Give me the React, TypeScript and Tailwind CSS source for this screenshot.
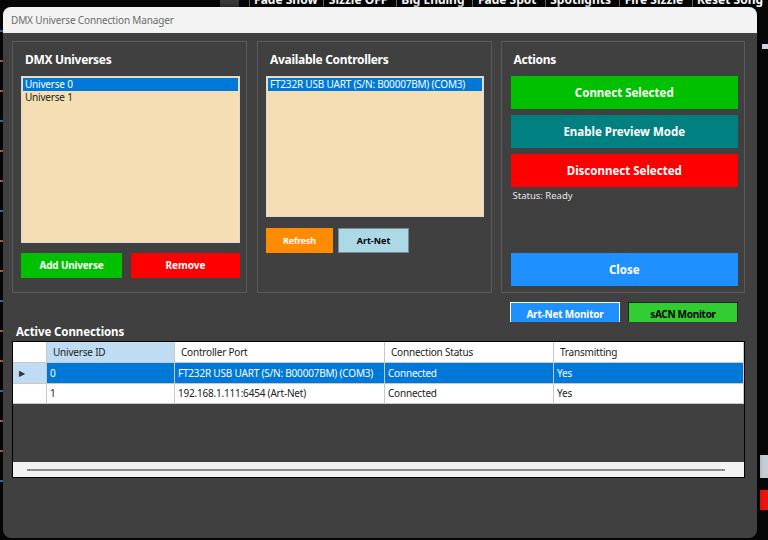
import React from "react";

const FONT = { fontFamily: '"Noto Sans", "Open Sans", sans-serif' };

const BG_BUTTONS = [
  { label: "Fade Show", w: 70 },
  { label: "Sizzle OFF", w: 72 },
  { label: "Big Ending", w: 72 },
  { label: "Fade Spot", w: 72 },
  { label: "Spotlights", w: 72 },
  { label: "Fire Sizzle", w: 72 },
  { label: "Reset Song", w: 72 },
];

function GroupBox({ title, width, pad, children }: { title: string; width: string; pad: string; children: React.ReactNode }) {
  return (
    <div className={`flex h-[252px] ${width} ${pad} flex-col border border-[#5a5a5a] pt-[9px]`}>
      <div className="h-[25px] whitespace-nowrap pl-[4px] text-[12px] font-bold leading-[17px] tracking-[-0.3px] text-white">
        {title}
      </div>
      {children}
    </div>
  );
}

function ListBox({ items, height }: { items: string[]; height: string }) {
  return (
    <div className={`${height} w-full border border-[#d9d9d9] bg-[#f5deb3] p-px`}>
      {items.map((it, i) => (
        <div
          key={it}
          className={
            i === 0
              ? "h-[13px] whitespace-nowrap bg-[#0078d7] pl-[2px] text-[10px] leading-[13px] tracking-[-0.2px] text-white"
              : "h-[13px] whitespace-nowrap pl-[2px] text-[10px] leading-[13px] tracking-[-0.2px] text-[#222]"
          }
        >
          {it}
        </div>
      ))}
    </div>
  );
}

const COLS = [
  { title: "Universe ID", w: "w-[128px]" },
  { title: "Controller Port", w: "w-[210px]" },
  { title: "Connection Status", w: "w-[169px]" },
  { title: "Transmitting", w: "flex-1" },
];

const ROWS = [
  ["0", "FT232R USB UART (S/N: B00007BM) (COM3)", "Connected", "Yes"],
  ["1", "192.168.1.111:6454 (Art-Net)", "Connected", "Yes"],
];

export default function App() {
  return (
    <div className="relative h-[540px] w-[768px] overflow-hidden bg-[#070707]" style={FONT}>
      {/* background application peeking around the dialog */}
      <div className="flex h-[7px] overflow-hidden pl-[220px]">
        <div className="mr-[10px] h-full w-[20px] bg-[#3a3a3a]" />
        {BG_BUTTONS.map((b) => (
          <div key={b.label} className="mr-[4px] h-full border-l border-[#6a6a6a] bg-black px-[4px]" style={{ width: b.w }}>
            <div className="-mt-[9px] whitespace-nowrap text-center text-[12px] font-bold text-white">{b.label}</div>
          </div>
        ))}
      </div>
      <div className="absolute left-0 top-[30px] flex h-[480px] w-[3px] flex-col gap-[28px]">
        {Array.from({ length: 16 }).map((_, i) => (
          <div key={i} className={i % 3 === 0 ? "h-[2px] bg-[#3a7fc0]" : "h-[2px] bg-[#b87a2e]"} />
        ))}
      </div>
      <div className="absolute right-0 top-[44px] h-[5px] w-[6px] bg-[#cfd6e0]" />
      <div className="absolute right-0 top-[455px] h-[23px] w-[8px] bg-[#c5ccd6]" />
      <div className="absolute right-0 top-[490px] h-[20px] w-[8px] bg-[#ee1111]" />

      {/* dialog window */}
      <div className="absolute left-[3px] top-[7px] flex h-[531px] w-[754px] flex-col overflow-hidden rounded-[8px] bg-[#404040] shadow-[0_0_6px_rgba(0,0,0,0.6)]">
        <div className="flex h-[26px] items-center whitespace-nowrap bg-[#f3f3f3] pl-[8px] text-[10px] tracking-[-0.15px] text-[#6b6b6b]">
          DMX Universe Connection Manager
        </div>

        <div className="flex flex-col pl-[9px] pr-[12px] pt-[8px]">
          <div className="flex gap-[10px]">
            <GroupBox title="DMX Universes" width="w-[235px]" pad="pl-[8px] pr-[6px]">
              <ListBox items={["Universe 0", "Universe 1"]} height="h-[167px]" />
              <div className="mt-[10px] flex gap-[9px]">
                <button className="h-[25px] w-[101px] whitespace-nowrap bg-[#00c000] text-[10px] font-bold tracking-[-0.2px] text-white">
                  Add Universe
                </button>
                <button className="h-[25px] w-[109px] whitespace-nowrap bg-[#ff0000] text-[10px] font-bold text-white">Remove</button>
              </div>
            </GroupBox>

            <GroupBox title="Available Controllers" width="w-[235px]" pad="pl-[8px] pr-[7px]">
              <ListBox items={["FT232R USB UART (S/N: B00007BM) (COM3)"]} height="h-[141px]" />
              <div className="mt-[11px] flex gap-[5px]">
                <button className="h-[25px] w-[67px] whitespace-nowrap bg-[#ff8c00] text-[9px] font-bold tracking-[-0.2px] text-white">
                  Refresh
                </button>
                <button className="h-[25px] w-[71px] whitespace-nowrap border border-[#7a8a90] bg-[#add8e6] text-[9px] font-bold text-black">
                  Art-Net
                </button>
              </div>
            </GroupBox>

            <div className="ml-[-1px] flex h-[252px] w-[245px] flex-col border border-[#5a5a5a] pl-[9px] pr-[6px] pt-[9px]">
              <div className="h-[25px] pl-[3px] text-[12px] font-bold leading-[17px] tracking-[-0.3px] text-white">Actions</div>
              <div className="flex flex-col gap-[6px]">
                <button className="h-[33px] w-full whitespace-nowrap bg-[#00c000] text-[11.5px] font-bold text-white">Connect Selected</button>
                <button className="h-[33px] w-full whitespace-nowrap bg-[#008080] text-[11.5px] font-bold text-white">Enable Preview Mode</button>
                <button className="h-[33px] w-full whitespace-nowrap bg-[#ff0000] text-[11.5px] font-bold text-white">Disconnect Selected</button>
              </div>
              <div className="mt-[2px] pl-[2px] text-[9.5px] leading-[14px] text-[#e6e6e6]">Status: Ready</div>
              <div className="flex-1" />
              <button className="mb-[6px] h-[33px] w-full bg-[#1e90ff] text-[11.5px] font-bold text-white">Close</button>
            </div>
          </div>

          <div className="mt-[9px] flex h-[20px] items-start overflow-hidden pl-[498px]">
            <button className="h-[25px] w-[110px] whitespace-nowrap border border-white bg-[#1e90ff] text-[10px] font-bold leading-[23px] tracking-[-0.2px] text-white">
              Art-Net Monitor
            </button>
            <button className="ml-[8px] h-[25px] w-[110px] whitespace-nowrap border border-[#222] bg-[#32cd32] text-[10px] font-bold leading-[23px] tracking-[-0.3px] text-black">
              sACN Monitor
            </button>
          </div>

          <div className="mt-[1px] h-[18px] whitespace-nowrap pl-[4px] text-[11.5px] font-bold leading-[18px] tracking-[-0.1px] text-white">
            Active Connections
          </div>

          <div className="flex h-[137px] flex-col border border-black bg-[#404040]">
            <div className="flex h-[20px] bg-white text-[10px] tracking-[-0.2px] text-[#222]">
              <div className="w-[34px] border-r border-[#c8c8c8]" />
              {COLS.map((c, i) => (
                <div
                  key={c.title}
                  className={`${c.w} flex items-center whitespace-nowrap border-r border-[#c8c8c8] pl-[6px] ${i === 0 ? "bg-[#bfdcf3]" : ""}`}
                >
                  {c.title}
                </div>
              ))}
            </div>
            {ROWS.map((r, ri) => (
              <div
                key={ri}
                className={
                  ri === 0
                    ? "flex h-[21px] border-t border-[#c8c8c8] bg-[#0078d7] text-[10px] tracking-[-0.2px] text-white"
                    : "flex h-[21px] border-y border-[#c8c8c8] bg-white text-[10px] tracking-[-0.2px] text-[#222]"
                }
              >
                <div
                  className={`flex w-[34px] items-center border-r border-[#c8c8c8] pl-[6px] ${ri === 0 ? "bg-[#bfdcf3]" : "bg-white"}`}
                >
                  {ri === 0 ? <span className="text-[8px] text-[#333]">▶</span> : null}
                </div>
                {r.map((cell, ci) => (
                  <div key={ci} className={`${COLS[ci].w} flex items-center whitespace-nowrap border-r border-[#c8c8c8] pl-[3px]`}>
                    {cell}
                  </div>
                ))}
              </div>
            ))}
            <div className="flex-1" />
            <div className="flex h-[15px] items-center bg-[#f2f2f2] px-[14px]">
              <div className="h-[2px] w-[698px] bg-[#8a8a8a]" />
            </div>
          </div>
        </div>
      </div>
    </div>
  );
}
